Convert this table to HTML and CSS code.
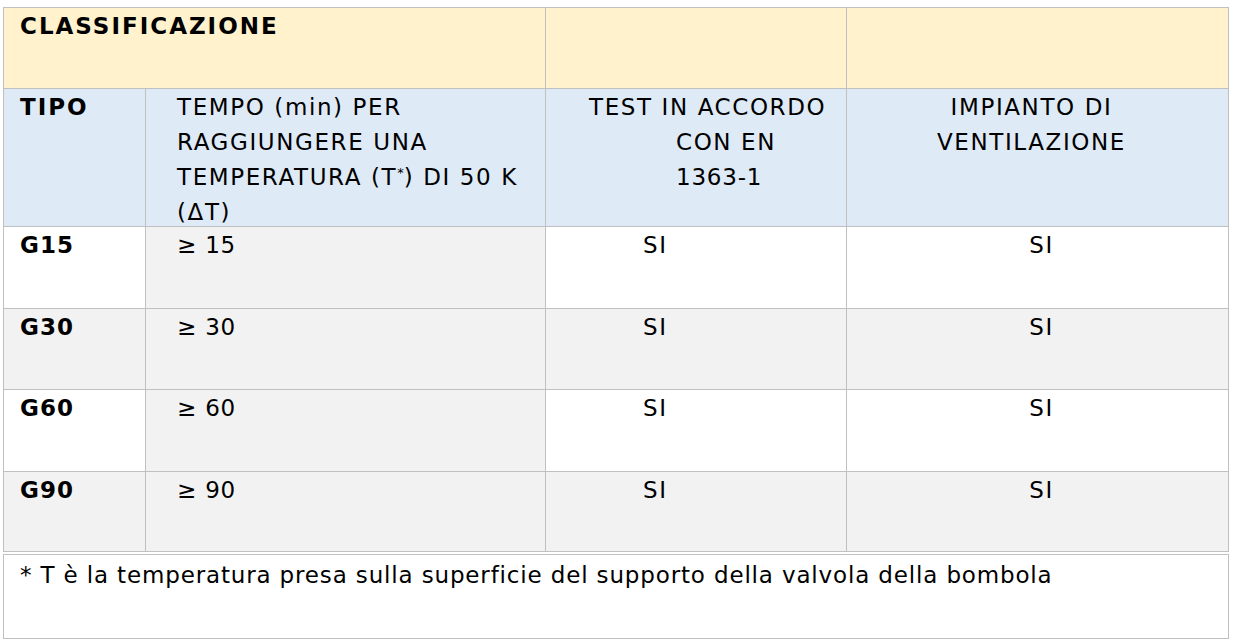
FILE: index.html
```html
<!DOCTYPE html>
<html lang="it">
<head>
<meta charset="utf-8">
<title>Classificazione</title>
<link rel="stylesheet" href="styles.css">
</head>
<body>
<div class="sheet">
  <div class="grid">
    <div class="cell yellow span2 bold caps">CLASSIFICAZIONE</div>
    <div class="cell yellow"></div>
    <div class="cell yellow"></div>

    <div class="cell blue bold caps c1">TIPO</div>
    <div class="cell blue caps c2"><span class="ln">TEMPO (min) PER</span><span class="ln">RAGGIUNGERE UNA</span><span class="ln">TEMPERATURA (T<sup>*</sup>) DI 50 K</span><span class="ln">(ΔT)</span></div>
    <div class="cell blue caps c3h"><span class="l1">TEST IN ACCORDO</span><span class="l2">CON EN</span><span class="l2 num">1363-1</span></div>
    <div class="cell blue caps c4h"><span class="ln">IMPIANTO DI</span><span class="ln">VENTILAZIONE</span></div>

    <div class="cell bold c1">G15</div>
    <div class="cell grey num c2">≥ 15</div>
    <div class="cell caps c3">SI</div>
    <div class="cell caps c4">SI</div>

    <div class="cell grey bold c1">G30</div>
    <div class="cell grey num c2">≥ 30</div>
    <div class="cell grey caps c3">SI</div>
    <div class="cell grey caps c4">SI</div>

    <div class="cell bold c1">G60</div>
    <div class="cell grey num c2">≥ 60</div>
    <div class="cell caps c3">SI</div>
    <div class="cell caps c4">SI</div>

    <div class="cell grey bold c1">G90</div>
    <div class="cell grey num c2">≥ 90</div>
    <div class="cell grey caps c3">SI</div>
    <div class="cell grey caps c4">SI</div>
  </div>
  <div class="note">* T è la temperatura presa sulla superficie del supporto della valvola della bombola</div>
</div>
</body>
</html>
```

FILE: styles.css
```css
html, body {
  margin: 0;
  padding: 0;
  background: #ffffff;
}

body {
  font-family: "DejaVu Sans", sans-serif;
  font-size: 23px;
  line-height: 35px;
  letter-spacing: 0.85px;
  color: #000000;
}

.sheet {
  padding: 7px 0 0 3px;
  width: 1226px;
}

.grid {
  display: grid;
  grid-template-columns: 142px 400px 301px 382px;
  grid-template-rows: 81px 138px 82px 81px 82px 80px;
  border-top: 1px solid #c0c0c0;
  border-left: 1px solid #c0c0c0;
}

.cell {
  border-right: 1px solid #c0c0c0;
  border-bottom: 1px solid #c0c0c0;
  padding-top: 1px;
  box-sizing: border-box;
  background: #ffffff;
  white-space: nowrap;
}

.span2 {
  grid-column: span 2;
  padding-left: 16px;
}

.yellow { background: #fff2cc; }
.blue { background: #deeaf6; }
.grey { background: #f2f2f2; }
.bold { font-weight: bold; letter-spacing: 1.1px; }
.caps { letter-spacing: 1.6px; }
.bold.caps { letter-spacing: 2px; }
.num { letter-spacing: 0.8px; }

.c1 { padding-left: 16px; }
.c2 { padding-left: 31px; }
.c3 { padding-left: 97px; }
.c4 { text-align: center; padding-left: 8px; }

.ln,
.l1,
.l2 {
  display: block;
}

.c3h .l1 { padding-left: 43px; }
.c3h .l2 { padding-left: 130px; }

.c4h {
  text-align: center;
  padding-right: 12px;
}

sup {
  font-size: 13px;
  line-height: 0;
  letter-spacing: 0;
  vertical-align: 8px;
}

.note {
  margin-top: 2px;
  height: 85px;
  box-sizing: border-box;
  border: 1px solid #c0c0c0;
  padding: 3px 0 0 16px;
}
```
